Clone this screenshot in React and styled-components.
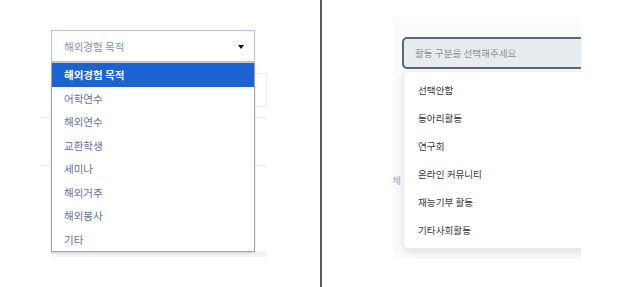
import React from "react";
import styled, { createGlobalStyle } from "styled-components";

const Global = createGlobalStyle`
  html, body { margin: 0; padding: 0; background: #fff; }
  body { font-family: "Noto Sans CJK KR", "Noto Sans", sans-serif; }
  * { box-sizing: border-box; }
`;

const Page = styled.div`
  width: 640px;
  height: 287px;
  display: grid;
  grid-template-columns: 320px 2px 318px;
  overflow: hidden;
`;

const VDivider = styled.div`
  background: #5a5a5a;
`;

/* ---------- left ---------- */
const LeftPane = styled.div`
  padding: 30px 0 0 40px;
  display: flex;
  flex-direction: column;
`;

const SelectWrap = styled.div`
  position: relative;
  width: 204px;
  margin-left: 11px;
  z-index: 2;
`;

const SelectBox = styled.div`
  height: 32px;
  border: 1px solid #b4c3e4;
  background: #fff;
  display: flex;
  align-items: center;
  justify-content: space-between;
  padding: 0 10px 0 12px;
  font-size: 10.5px;
  color: #8a91a6;
`;

const Caret = styled.svg`
  width: 6px;
  height: 4px;
  margin-top: 1px;
`;

const NativeList = styled.ul`
  position: absolute;
  top: 32px;
  left: 0;
  width: 204px;
  margin: 0;
  padding: 0;
  list-style: none;
  background: #fff;
  border: 1px solid #a3a3a3;
  border-top: 1px solid #c9c9c9;
  box-shadow: 0 1px 2px rgba(0, 0, 0, 0.15);
`;

const NativeItem = styled.li`
  height: 23.5px;
  display: flex;
  align-items: center;
  padding-left: 12px;
  font-size: 10.5px;
  font-weight: ${(p) => (p.$active ? 700 : 400)};
  color: ${(p) => (p.$active ? "#ffffff" : "#5f6fa8")};
  background: ${(p) => (p.$active ? "#1b63d2" : "transparent")};
`;

const BgForm = styled.div`
  width: 227px;
  height: 195px;
  display: flex;
  flex-direction: column;
  align-items: stretch;
`;

const BgInput = styled.div`
  margin-top: 11px;
  align-self: flex-end;
  width: 60px;
  height: 34px;
  border: 1px solid #eceef2;
  border-radius: 2px;
`;

const BgLine = styled.div`
  height: 1px;
  background: #eff1f4;
  margin-top: ${(p) => p.$gap}px;
`;

const BgBand = styled.div`
  margin-top: auto;
  margin-left: 11px;
  height: 6px;
  background: #f3f4f7;
`;

/* ---------- right ---------- */
const RightPane = styled.div`
  padding: 18px 0 0 71px;
`;

const Panel = styled.div`
  position: relative;
  width: 188px;
  height: 241px;
  background: #fafbfc;
  overflow: hidden;
  padding: 19px 0 0 9px;
`;

const CustomInput = styled.div`
  width: 220px;
  height: 32px;
  border: 2px solid #62666b;
  border-radius: 5px;
  background: #e9ecef;
  display: flex;
  align-items: center;
  padding-left: 11px;
  font-size: 9.6px;
  color: #8b9096;
`;

const GhostLabel = styled.span`
  position: absolute;
  left: -1px;
  top: 155px;
  font-size: 9.6px;
  color: #9aa8c0;
`;

const Menu = styled.ul`
  position: absolute;
  top: 53px;
  left: 10px;
  width: 220px;
  margin: 0;
  padding: 4px 0;
  list-style: none;
  background: #fff;
  border: 1px solid #ececee;
  border-radius: 6px;
  box-shadow: 0 3px 8px rgba(0, 0, 0, 0.12);
`;

const MenuItem = styled.li`
  height: 28px;
  display: flex;
  align-items: center;
  padding-left: 14px;
  font-size: 9.6px;
  color: #333840;
`;

const leftItems = ["해외경험 목적", "어학연수", "해외연수", "교환학생", "세미나", "해외거주", "해외봉사", "기타"];
const rightItems = ["선택안함", "동아리활동", "연구회", "온라인 커뮤니티", "재능기부 활동", "기타사회활동"];

export default function App() {
  return (
    <>
      <Global />
      <Page>
        <LeftPane>
          <SelectWrap>
            <SelectBox>
              <span>해외경험 목적</span>
              <Caret viewBox="0 0 6 4">
                <path d="M0 0 L6 0 L3 4 Z" fill="#111" />
              </Caret>
            </SelectBox>
            <NativeList>
              {leftItems.map((t, i) => (
                <NativeItem key={t} $active={i === 0}>
                  {t}
                </NativeItem>
              ))}
            </NativeList>
          </SelectWrap>
          <BgForm>
            <BgInput />
            <BgLine $gap={10} />
            <BgLine $gap={47} />
            <BgBand />
          </BgForm>
        </LeftPane>
        <VDivider />
        <RightPane>
          <Panel>
            <CustomInput>활동 구분을 선택해주세요</CustomInput>
            <GhostLabel>체</GhostLabel>
            <Menu>
              {rightItems.map((t) => (
                <MenuItem key={t}>{t}</MenuItem>
              ))}
            </Menu>
          </Panel>
        </RightPane>
      </Page>
    </>
  );
}
